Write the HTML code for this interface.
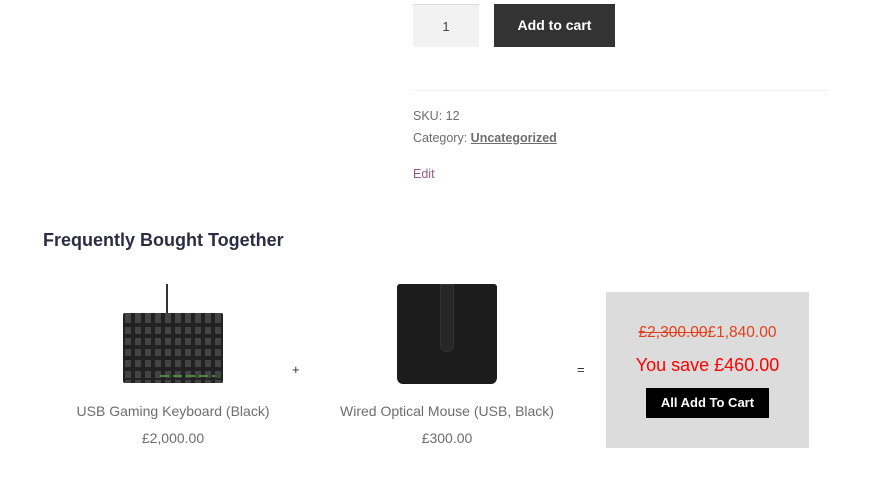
<!DOCTYPE html>
<html><head><style>
*{margin:0;padding:0;box-sizing:border-box}
body{width:870px;height:504px;background:#fff;font-family:"Liberation Sans",sans-serif;color:#6d6d6d;position:relative;overflow:hidden}
.a{position:absolute;white-space:nowrap}
</style></head><body>
<div class="a" style="left:413px;top:4px;width:66px;height:43px;background:#f2f2f2;border-top:1px solid #ddd;font-size:13px;color:#43454b;text-align:center;line-height:43px">1</div>
<div class="a" style="left:494px;top:4px;width:121px;height:43px;background:#333;color:#fff;font-weight:bold;font-size:14px;text-align:center;line-height:43px">Add to cart</div>
<div class="a" style="left:413px;top:90px;width:415px;height:1px;background:#eee"></div>
<div class="a" style="left:413px;top:109px;font-size:12.5px">SKU: 12</div>
<div class="a" style="left:413px;top:131px;font-size:12.5px">Category: <span style="text-decoration:underline;font-weight:bold;color:#6d6d6d">Uncategorized</span></div>
<div class="a" style="left:413px;top:167px;font-size:12.5px;color:#96588a">Edit</div>
<div class="a" style="left:43px;top:230px;font-size:18px;font-weight:bold;color:#2b2d42">Frequently Bought Together</div>
<!-- keyboard -->
<div class="a" style="left:166px;top:284px;width:2px;height:32px;background:#333"></div>
<div class="a" style="left:123px;top:313px;width:100px;height:70px;background:#222;border-radius:2px;
background-image:repeating-linear-gradient(90deg,transparent 0 2px,#444 2px 8px,transparent 8px 10px);"></div>
<div class="a" style="left:123px;top:316px;width:100px;height:64px;background:repeating-linear-gradient(180deg,transparent 0 7px,#222 7px 11px)"></div>
<div class="a" style="left:160px;top:375px;width:55px;height:2px;background:repeating-linear-gradient(90deg,#4a8a3a 0 9px,transparent 9px 13px)"></div>
<div class="a" style="left:292px;top:362px;font-size:13px;color:#333">+</div>
<!-- mouse -->
<div class="a" style="left:397px;top:284px;width:100px;height:100px;background:#1c1c1c;border-radius:3px 3px 6px 6px"></div>
<div class="a" style="left:440px;top:284px;width:14px;height:68px;background:#262626;border-radius:0 0 7px 7px;border:1px solid #333"></div>
<div class="a" style="left:577px;top:362px;font-size:13px;color:#333">=</div>
<div class="a" style="left:43px;top:403px;width:260px;text-align:center;font-size:14px">USB Gaming Keyboard (Black)</div>
<div class="a" style="left:43px;top:430px;width:260px;text-align:center;font-size:14px">£2,000.00</div>
<div class="a" style="left:317px;top:403px;width:260px;text-align:center;font-size:14px">Wired Optical Mouse (USB, Black)</div>
<div class="a" style="left:317px;top:430px;width:260px;text-align:center;font-size:14px">£300.00</div>
<div class="a" style="left:606px;top:292px;width:203px;height:156px;background:#dcdcdc"></div>
<div class="a" style="left:606px;top:324px;width:203px;text-align:center;font-size:15.5px;color:#e2401c"><s>£2,300.00</s>£1,840.00</div>
<div class="a" style="left:606px;top:355px;width:203px;text-align:center;font-size:18px;color:#f00">You save £460.00</div>
<div class="a" style="left:646px;top:388px;width:123px;height:30px;background:#000;color:#fff;font-weight:bold;font-size:13px;text-align:center;line-height:30px">All Add To Cart</div>
</body></html>
